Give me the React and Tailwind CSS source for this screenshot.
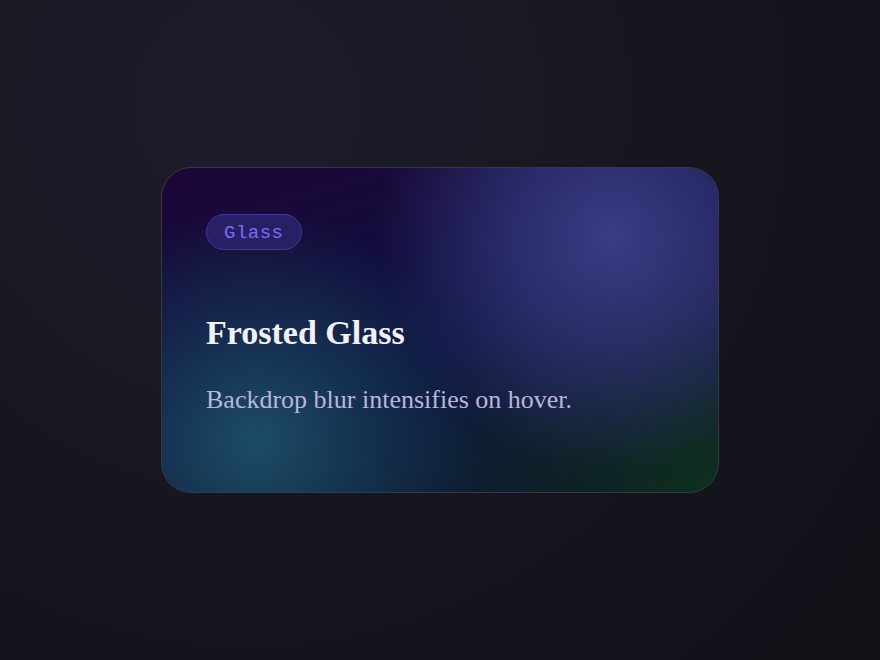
export default function App() {
  return (
    <div className="flex min-h-screen items-center justify-center bg-[radial-gradient(circle_at_28%_16%,#1d1c2b_0%,#17161f_48%,#111118_100%)]">
      <div className="relative flex h-[326px] w-[558px] flex-col overflow-hidden rounded-[30px] border-[1.5px] border-[#383842] bg-[radial-gradient(circle_at_81%_21%,rgba(58,60,132,1)_0%,rgba(50,52,120,0.75)_20%,rgba(40,42,100,0)_45%),radial-gradient(circle_at_17%_84%,rgba(28,76,102,1)_0%,rgba(24,64,92,0.6)_20%,rgba(20,50,80,0)_42%),radial-gradient(circle_at_100%_100%,rgba(14,48,30,1)_0%,rgba(14,40,32,0.6)_20%,rgba(14,30,30,0)_45%),linear-gradient(165deg,#1d0737_0%,#120d3c_30%,#0e1640_55%,#0d1c34_80%,#0c1a24_100%)] px-[44px] pt-[46px]">
        <span className="self-start rounded-full border border-[#4536a0] bg-[#272064] px-[17px] pb-[6px] pt-[8px] font-['Liberation_Mono',monospace] text-[19px] leading-[20px] tracking-[0.5px] text-[#7b6cf0]">
          Glass
        </span>
        <h2 className="mt-[63px] font-['Liberation_Serif',serif] text-[34px] font-bold leading-[1.2] text-[#f4f1ff]">
          Frosted Glass
        </h2>
        <p className="mt-[26px] font-['Liberation_Serif',serif] text-[26px] leading-[1.5] text-[#b9b6dc]">
          Backdrop blur intensifies on hover.
        </p>
      </div>
    </div>
  );
}
